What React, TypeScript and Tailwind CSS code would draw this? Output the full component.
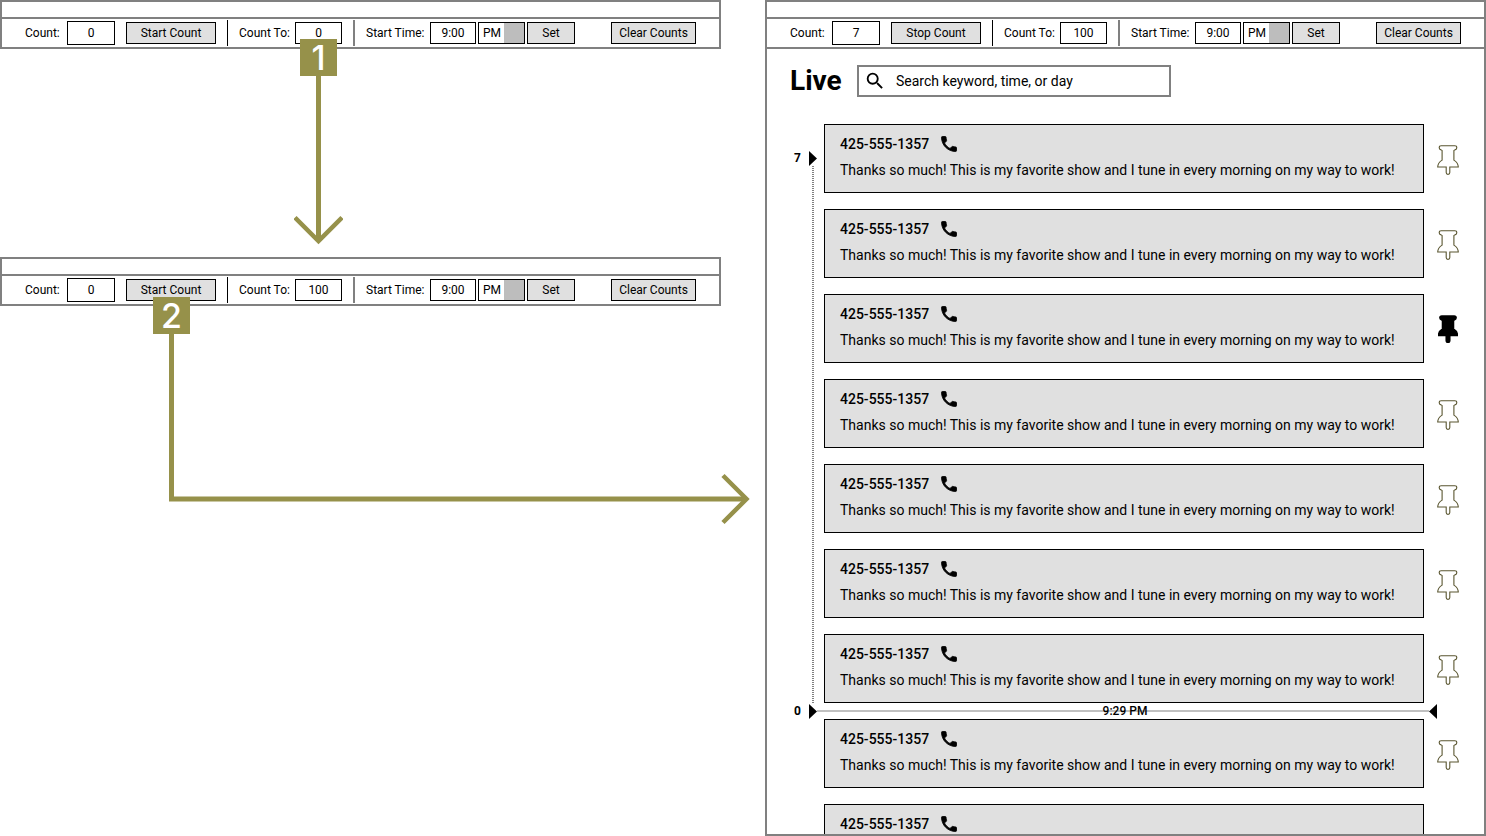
import React, { useState } from 'react';
import { MdSearch } from 'react-icons/md';

interface ToolbarProps {
  count: string;
  countTo: string;
  running?: boolean;
}

interface Message {
  id: number;
  phone: string;
  text?: string;
}

const TEXT = 'Thanks so much! This is my favorite show and I tune in every morning on my way to work!';

const messages: Message[] = Array.from({ length: 9 }, (_, i) => ({
  id: i + 1,
  phone: '425-555-1357',
  text: i < 8 ? TEXT : undefined,
}));

// messages received since the count started
const COUNTED = 7;

const inputStyle = 'h-[22px] border border-black bg-white text-center outline-none';
const buttonStyle = 'h-[22px] shrink-0 border border-black bg-[#e0e0e0] text-center hover:bg-[#d0d0d0]';

const Toolbar: React.FC<ToolbarProps> = ({ count, countTo, running = false }) => {
  return (
    <div className="text-xs">
      <div className="h-[17px] border-b-2 border-[#808080]" />
      <div className="flex h-7 items-center gap-[11px] px-[23px] whitespace-nowrap">
        <label className="flex items-center">
          <span className="w-[42px]">Count:</span>
          <input className="h-6 w-12 border border-black bg-white text-center outline-none" defaultValue={count} />
        </label>
        <button type="button" className={`${buttonStyle} w-[90px]`}>
          {running ? 'Stop Count' : 'Start Count'}
        </button>
        <div className="h-[26px] w-px shrink-0 bg-black" />
        <label className="flex items-center">
          <span className="w-[56px]">Count To:</span>
          <input className={`${inputStyle} w-[47px]`} defaultValue={countTo} />
        </label>
        <div className="h-[26px] w-0.5 shrink-0 bg-[#808080]" />
        <div className="flex items-center gap-0.5">
          <label className="flex items-center">
            <span className="w-[64px]">Start Time:</span>
            <input className={`${inputStyle} w-[46px]`} defaultValue="9:00" />
          </label>
          <div className="flex h-[22px] w-[47px] border border-black bg-white">
            <select aria-label="AM or PM" className="w-[25px] appearance-none pl-1 outline-none" defaultValue="PM">
              <option>AM</option>
              <option>PM</option>
            </select>
            <span className="flex-1 bg-[#bdbdbd]" />
          </div>
          <button type="button" className={`${buttonStyle} w-12`}>Set</button>
        </div>
        <button type="button" className={`${buttonStyle} ml-auto w-[85px]`}>Clear Counts</button>
      </div>
    </div>
  );
};

const PhoneIcon: React.FC = () => (
  <svg viewBox="0 0 24 24" className="size-5" stroke="#000" strokeWidth="1">
    <path d="M6.62 10.79c1.44 2.83 3.76 5.14 6.59 6.59l2.2-2.2c.27-.27.67-.36 1.02-.24 1.12.37 2.33.57 3.57.57.55 0 1 .45 1 1V20c0 .55-.45 1-1 1-9.39 0-17-7.61-17-17 0-.55.45-1 1-1h3.5c.55 0 1 .45 1 1 0 1.25.2 2.45.57 3.57.11.35.03.74-.25 1.02l-2.2 2.2z" />
  </svg>
);

const Pin: React.FC<{ filled: boolean }> = ({ filled }) => (
  <svg
    viewBox="0 0 22 30"
    className={filled ? 'mx-auto h-7 w-5' : 'h-[30px] w-[22px]'}
    fill={filled ? '#000' : '#fff'}
    stroke={filled ? '#000' : '#5a5630'}
    strokeWidth={filled ? 2 : 1.1}
  >
    <path d="M4.2.8h13.6c1.2 0 2 .8 2 1.9s-.8 1.9-1.9 2.2l-1 .6v9.6c2.4 1.5 4.3 4 4.4 6.9h-8.5v5.6c0 1-.8 1.8-1.8 1.8s-1.8-.8-1.8-1.8V22H.7c.1-2.9 2-5.4 4.4-6.9V5.5l-1-.6c-1.1-.3-1.9-1.1-1.9-2.2s.8-1.9 2-1.9z" />
  </svg>
);

const Marker: React.FC<{ left?: boolean }> = ({ left = false }) => (
  <svg viewBox="0 0 8 15" className="h-[15px] w-2 shrink-0">
    <path d={left ? 'M8 0v15L0 7.5z' : 'M0 0v15l8-7.5z'} />
  </svg>
);

const StepBadge: React.FC<{ step: number }> = ({ step }) => (
  <div className="flex size-[37px] items-center justify-center bg-[#96914a] font-[Inter,sans-serif] text-[34px] leading-none font-medium text-white">
    {step}
  </div>
);

interface MessageRowProps {
  message: Message;
  pinned: boolean;
  onTogglePin: (id: number) => void;
}

const MessageRow: React.FC<MessageRowProps> = ({ message, pinned, onTogglePin }) => {
  return (
    <li className="flex items-start gap-[13px]">
      <div className="min-w-0 flex-1 border border-black bg-[#e0e0e0] px-[15px] pt-[9px] pb-3 text-sm">
        <div className="flex h-5 items-center gap-[10px] font-medium">
          <span>{message.phone}</span>
          <a href={`tel:${message.phone}`} aria-label="Call">
            <PhoneIcon />
          </a>
        </div>
        {message.text && <p className="mt-1.5 leading-5">{message.text}</p>}
      </div>
      <div className="w-[22px] shrink-0 pt-[21px]">
        {message.text && (
          <button
            type="button"
            className="block w-full"
            aria-label={pinned ? 'Unpin message' : 'Pin message'}
            onClick={() => onTogglePin(message.id)}
          >
            <Pin filled={pinned} />
          </button>
        )}
      </div>
    </li>
  );
};

const LivePanel: React.FC = () => {
  const [pinned, setPinned] = useState<number[]>([3]);

  const togglePin = (id: number) => {
    setPinned((prev) => (prev.includes(id) ? prev.filter((p) => p !== id) : [...prev, id]));
  };

  const renderRow = (message: Message) => (
    <MessageRow
      key={message.id}
      message={message}
      pinned={pinned.includes(message.id)}
      onTogglePin={togglePin}
    />
  );

  return (
    <section className="h-screen overflow-hidden border-2 border-[#808080]">
      <Toolbar count="7" countTo="100" running />
      <div className="border-t-2 border-[#808080] pt-4">
        <div className="flex h-8 items-center pl-[23px]">
          <h1 className="w-[67px] text-[28px] leading-8 font-bold">Live</h1>
          <label className="flex h-8 w-[314px] items-center gap-[10px] border-2 border-[#808080] pl-[5px]">
            <MdSearch size={22} className="shrink-0" />
            <input
              type="search"
              aria-label="Search messages"
              placeholder="Search keyword, time, or day"
              className="min-w-0 flex-1 text-sm outline-none placeholder:text-black"
            />
          </label>
        </div>

        <div className="mt-[27px] pr-[25px] pl-[27px]">
          <div className="flex">
            <div className="flex w-[30px] shrink-0 flex-col pt-[26px]">
              <div className="flex items-center text-xs leading-4 font-bold">
                <span className="w-[15px]">{COUNTED}</span>
                <Marker />
              </div>
              <div className="ml-[18px] w-0.5 flex-1 bg-[repeating-linear-gradient(to_bottom,#808080_0_1px,transparent_1px_2px)]" />
            </div>
            <ul className="flex min-w-0 flex-1 flex-col gap-4">
              {messages.slice(0, COUNTED).map(renderRow)}
            </ul>
          </div>

          {/* start of the count */}
          <div className="flex h-4 items-center pr-[22px] text-xs leading-4">
            <span className="w-[15px] font-bold">0</span>
            <Marker />
            <div className="relative h-0.5 flex-1 bg-[#c0c0c0]">
              <time className="absolute inset-x-0 -top-[7px] pl-1 text-center font-medium">9:29 PM</time>
            </div>
            <Marker left />
          </div>

          <ul className="flex flex-col gap-4 pl-[30px]">
            {messages.slice(COUNTED).map(renderRow)}
          </ul>
        </div>
      </div>
    </section>
  );
};

const App: React.FC = () => {
  return (
    <main className="grid grid-cols-2 gap-11 bg-white font-[Roboto,sans-serif] text-black">
      <div className="flex flex-col gap-[208px]">
        <div className="relative border-2 border-[#808080]">
          <Toolbar count="0" countTo="0" />
          <div className="absolute top-[37px] left-[292px] flex w-[49px] flex-col items-center">
            <StepBadge step={1} />
            <svg viewBox="0 0 49 170" className="h-[170px] w-[49px]" fill="none" stroke="#96914a">
              <path d="M24.5 0V164" strokeWidth="5" />
              <path d="M1 141.5L24.5 165L48 141.5" strokeWidth="4.5" />
            </svg>
          </div>
        </div>

        <div className="relative border-2 border-[#808080]">
          <Toolbar count="0" countTo="100" />
          <div className="absolute top-[38px] left-[151px]">
            <StepBadge step={2} />
            <svg viewBox="0 0 600 192" className="h-48 w-[600px] max-w-none" fill="none" stroke="#96914a">
              <path d="M18.5 0V165H593" strokeWidth="5" />
              <path d="M570 141.5L593.5 165L570 188.5" strokeWidth="4.5" />
            </svg>
          </div>
        </div>
      </div>

      <LivePanel />
    </main>
  );
};

export default App;
